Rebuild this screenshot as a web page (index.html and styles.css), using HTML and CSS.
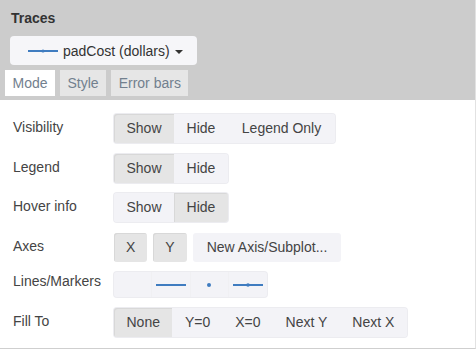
FILE: index.html
```html
<!DOCTYPE html>
<html lang="en">

<head>
    <meta charset="UTF-8">
    <meta name="viewport" content="width=device-width, initial-scale=1.0">
    <title>Traces</title>
    <link rel="stylesheet" href="styles.css">
</head>

<body>
    <div class="panel">
        <div class="panel-head">
            <div class="title">Traces</div>
            <button class="trace-select">
                <svg class="trace-icon" width="30" height="6" viewBox="0 0 30 6">
                    <line x1="0" y1="3" x2="30" y2="3" stroke="#3f7cc0" stroke-width="2"/>
                    <circle cx="15" cy="3" r="1.6" fill="#3f7cc0"/>
                </svg>
                <span>padCost (dollars)</span>
                <span class="caret"></span>
            </button>
            <div class="tabs">
                <div class="tab active">Mode</div>
                <div class="tab">Style</div>
                <div class="tab">Error bars</div>
            </div>
        </div>

        <div class="panel-body">
            <div class="row">
                <div class="label">Visibility</div>
                <div class="seg">
                    <div class="seg-btn on">Show</div>
                    <div class="seg-btn">Hide</div>
                    <div class="seg-btn wide">Legend Only</div>
                </div>
            </div>
            <div class="row">
                <div class="label">Legend</div>
                <div class="seg">
                    <div class="seg-btn on">Show</div>
                    <div class="seg-btn">Hide</div>
                </div>
            </div>
            <div class="row">
                <div class="label">Hover info</div>
                <div class="seg">
                    <div class="seg-btn">Show</div>
                    <div class="seg-btn on">Hide</div>
                </div>
            </div>
            <div class="row">
                <div class="label">Axes</div>
                <div class="axes">
                    <div class="seg-btn single on">X</div>
                    <div class="seg-btn single on">Y</div>
                    <div class="seg-btn single">New Axis/Subplot...</div>
                </div>
            </div>
            <div class="row">
                <div class="label lines-label">Lines/Markers</div>
                <div class="seg lines">
                    <div class="line-btn"></div>
                    <div class="line-btn">
                        <svg width="30" height="4" viewBox="0 0 30 4"><line x1="0" y1="2" x2="30" y2="2" stroke="#3f7cc0" stroke-width="2"/></svg>
                    </div>
                    <div class="line-btn">
                        <svg width="6" height="6" viewBox="0 0 6 6"><circle cx="3" cy="3" r="2" fill="#3f7cc0"/></svg>
                    </div>
                    <div class="line-btn">
                        <svg width="30" height="6" viewBox="0 0 30 6">
                            <line x1="0" y1="3" x2="30" y2="3" stroke="#3f7cc0" stroke-width="2"/>
                            <circle cx="15" cy="3" r="1.8" fill="#3f7cc0"/>
                        </svg>
                    </div>
                </div>
            </div>
            <div class="row">
                <div class="label">Fill To</div>
                <div class="seg">
                    <div class="seg-btn on">None</div>
                    <div class="seg-btn">Y=0</div>
                    <div class="seg-btn">X=0</div>
                    <div class="seg-btn">Next Y</div>
                    <div class="seg-btn">Next X</div>
                </div>
            </div>
        </div>
    </div>
</body>

</html>
```

FILE: styles.css
```css
body {
    margin: 0;
    font-family: "Liberation Sans", Arial, sans-serif;
    color: #444;
    background: #fff;
}

.panel {
    width: 475px;
    height: 348px;
    border-right: 1px solid #e2e2e2;
    border-bottom: 1px solid #cfcfcf;
}

.panel-head {
    background: #cccccc;
    padding: 9px 0 4px 0;
}

.title {
    font-size: 14px;
    font-weight: bold;
    color: #333;
    padding-left: 11px;
    height: 18px;
    line-height: 18px;
}

.trace-select {
    display: flex;
    align-items: center;
    margin: 9px 0 0 10px;
    width: 187px;
    height: 29px;
    padding: 0 0 0 18px;
    border: none;
    border-radius: 4px;
    background: #f6f6f9;
    font-family: inherit;
    font-size: 14px;
    color: #333;
}

.trace-icon {
    margin-right: 5px;
}

.caret {
    width: 0;
    height: 0;
    margin-left: 5px;
    margin-top: 2px;
    border-left: 4px solid transparent;
    border-right: 4px solid transparent;
    border-top: 4px solid #333;
}

.tabs {
    display: flex;
    gap: 5px;
    margin: 5px 0 0 5px;
}

.tab {
    height: 26px;
    line-height: 26px;
    padding: 0 7.5px;
    font-size: 14px;
    color: #72808e;
    background: #e6e6e6;
}

.tab.active {
    background: #fff;
}

.panel-body {
    display: flex;
    flex-direction: column;
    gap: 10.5px;
    padding: 14px 0 0 13px;
}

.row {
    display: flex;
    align-items: center;
}

.label {
    width: 101px;
    font-size: 14px;
    color: #444;
    padding-bottom: 3px;
}

.lines-label {
    padding-bottom: 7px;
}

.seg {
    display: flex;
    border-radius: 3px;
    background: #f3f3f7;
    box-shadow: 0 0 0 1px #ececf0;
}

.seg-btn {
    height: 29px;
    line-height: 29px;
    padding: 0 12.5px;
    font-size: 14px;
    color: #444;
    background: #f3f3f7;
}

.seg-btn.wide {
    padding: 0 14px;
}

.seg .seg-btn:first-child {
    border-radius: 3px 0 0 3px;
}

.seg .seg-btn:last-child {
    border-radius: 0 3px 3px 0;
}

.seg-btn.on {
    background: #e5e5e5;
    box-shadow: inset 1px 1px 0 #d8d8d8;
}

.axes {
    display: flex;
    gap: 6px;
}

.seg-btn.single {
    border-radius: 3px;
    padding: 0 12px;
}

.seg-btn.single:last-child {
    padding: 0 14px;
}

.lines {
    height: 25px;
}

.line-btn {
    box-sizing: border-box;
    width: 38.25px;
    display: flex;
    align-items: center;
    justify-content: center;
    border-right: 1px solid #f0f0f3;
}

.line-btn:last-child {
    border-right: none;
}
```
